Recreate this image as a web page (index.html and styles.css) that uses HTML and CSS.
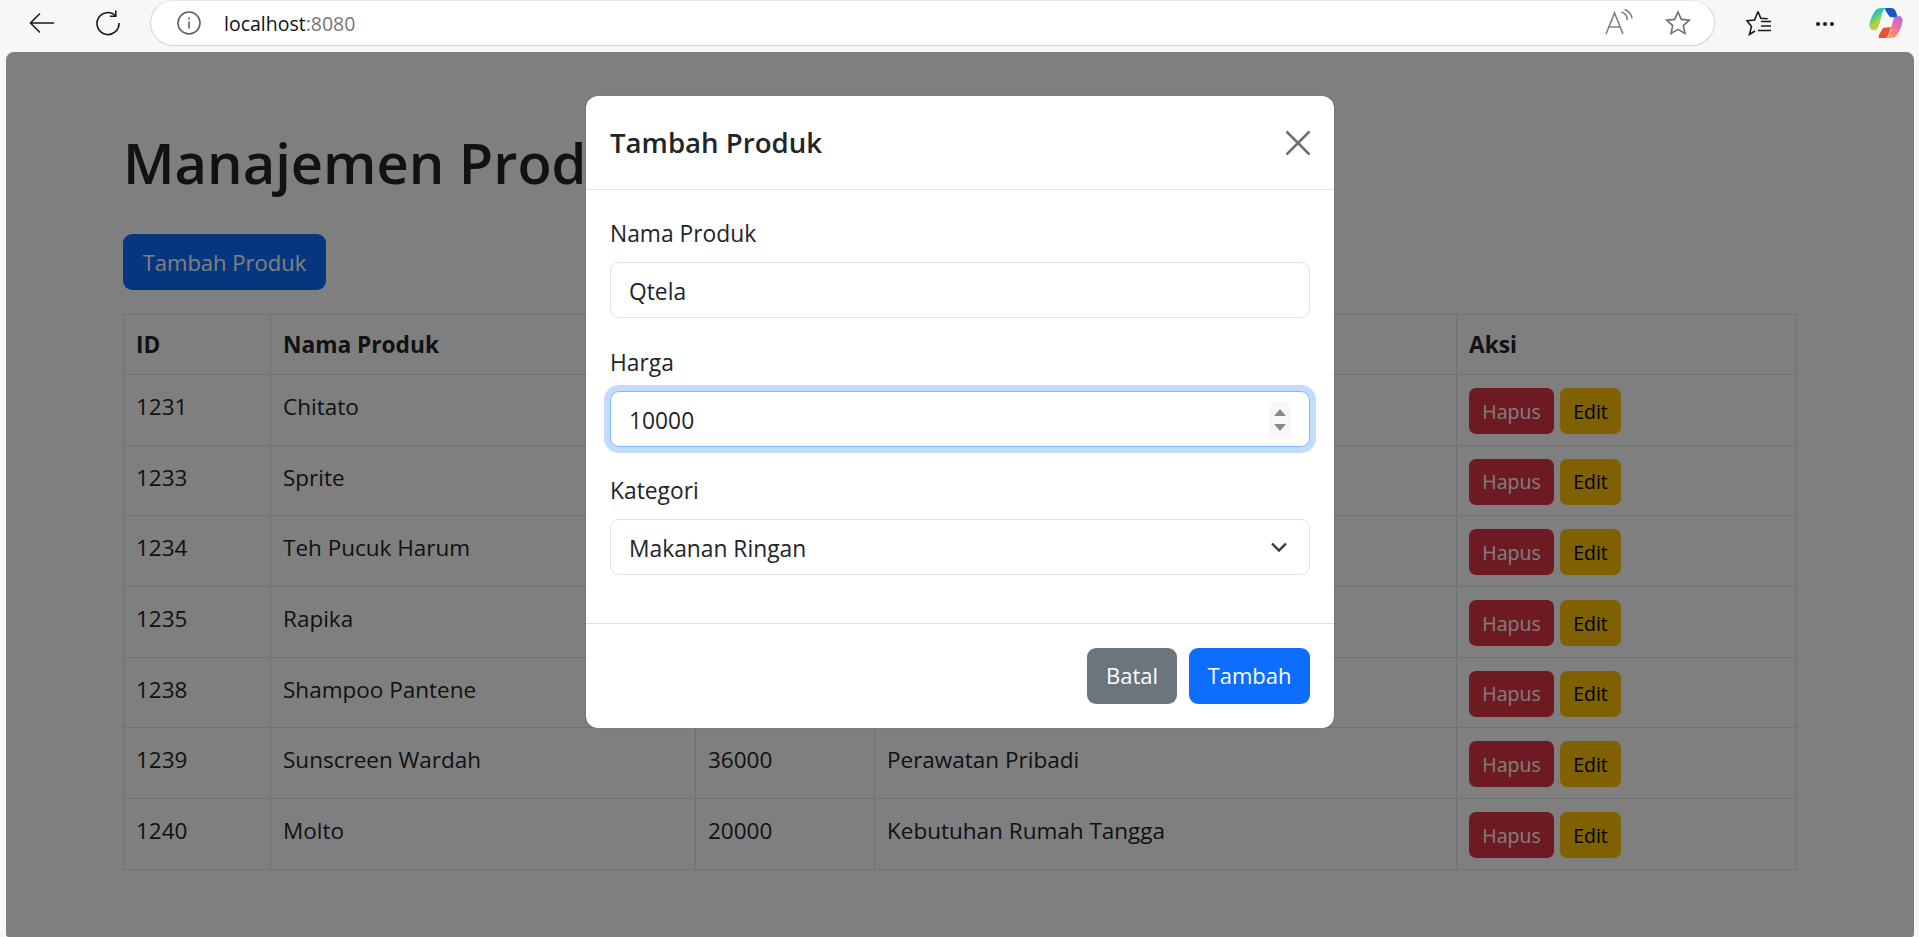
FILE: index.html
```html
<!DOCTYPE html>
<html lang="en">
<head>
    <meta charset="UTF-8">
    <meta name="viewport" content="width=device-width, initial-scale=1.0">
    <title>Manajemen Produk</title>
    <link rel="stylesheet" href="styles.css">
</head>
<body>
    <div class="toolbar">
        <svg class="tool-icon back-icon" width="28" height="28" viewBox="0 0 28 28"><path d="M26 14H3M12 4.500L2.500 14l9.500 9.500" /></svg>
        <svg class="tool-icon reload-icon" width="28" height="28" viewBox="0 0 28 28"><path d="M21.500 6.500A11 11 0 1 0 25 14M21.800 1.500v5.800H16" /></svg>
        <div class="omnibox">
            <svg class="info-icon" width="24" height="24" viewBox="0 0 24 24"><circle cx="12" cy="12" r="11" /><path d="M12 10.500v7M12 6.500v2" /></svg>
            <span class="url">localhost<span class="port">:8080</span></span>
            <svg class="read-icon" width="30" height="28" viewBox="0 0 30 28"><path d="M2 25L10.500 4 19 25M5 18h11M17.500 3c3 1 5.500 4 6 8M20.500 0.500c4 1.500 7 5 7.500 9" /></svg>
            <svg class="star-icon" width="26" height="26" viewBox="0 0 26 26"><path d="M13 2l3.300 7.400 8 .8-6 5.400 1.700 7.900-7-4.100-7 4.100 1.700-7.900-6-5.400 8-.8z" /></svg>
        </div>
        <svg class="tool-icon fav-icon" width="28" height="28" viewBox="0 0 28 28"><path d="M12 2.500l2.700 6.800 7 .5M9 22l-5.500 3.500 2-8L1 11.800l7.500-.8L12 2.500M15 12.500h10M15 17h10M12 21.500h13" /></svg>
        <svg class="more-icon" width="20" height="6" viewBox="0 0 20 6"><circle cx="3" cy="3" r="2" /><circle cx="10" cy="3" r="2" /><circle cx="17" cy="3" r="2" /></svg>
        <svg class="copilot-icon" width="34" height="32" viewBox="0 0 34 32">
            <defs>
                <linearGradient id="cop-left" x1="0" y1="0" x2="0.600" y2="1">
                    <stop offset="0" stop-color="#1e8fe8" />
                    <stop offset="0.350" stop-color="#2fc6b0" />
                    <stop offset="0.650" stop-color="#a8d53a" />
                    <stop offset="1" stop-color="#f5b32c" />
                </linearGradient>
                <linearGradient id="cop-right" x1="0.800" y1="0" x2="0.300" y2="1">
                    <stop offset="0" stop-color="#b46ae0" />
                    <stop offset="0.500" stop-color="#f26fa0" />
                    <stop offset="1" stop-color="#fba34a" />
                </linearGradient>
            </defs>
            <path fill="#1a56c8" d="M15 1h7c2.500 0 4 1.500 5 4l2 6-8-1-3-4c-1-2-2-3.500-3-5z" />
            <path fill="url(#cop-left)" d="M12 1h6c-2 0-3.500 1.500-4.500 4.500L10 18c-1 3.500-2.500 5-5 5-3 0-5-2-4.500-5.500C1 13 4 7 6 4c1.500-2 3.500-3 6-3z" />
            <path fill="#e8503a" d="M10 31h7c1.500-1 2.500-3 3-5l2-6-8 1-3 5c-1 2-2 3.500-1 5z" />
            <path fill="url(#cop-right)" d="M22 31h-6c2 0 3.500-1.500 4.500-4.500L24 14c1-3.500 2.500-5 5-5 3 0 5 2 4.500 5.500-.5 4.500-3.500 10.500-5.500 13.500-1.500 2-3.500 3-6 3z" />
        </svg>
    </div>

    <div class="page">
        <div class="container">
            <h1>Manajemen Produk</h1>
            <button class="btn btn-primary add-btn">Tambah Produk</button>
            <table class="product-table">
                <thead>
                    <tr>
                        <th class="col-id">ID</th>
                        <th class="col-name">Nama Produk</th>
                        <th class="col-price">Harga</th>
                        <th class="col-cat">Kategori</th>
                        <th>Aksi</th>
                    </tr>
                </thead>
                <tbody>
                    <tr><td>1231</td><td>Chitato</td><td>12000</td><td>Makanan Ringan</td><td><button class="btn btn-sm btn-danger">Hapus</button><button class="btn btn-sm btn-warning">Edit</button></td></tr>
                    <tr><td>1233</td><td>Sprite</td><td>8000</td><td>Minuman</td><td><button class="btn btn-sm btn-danger">Hapus</button><button class="btn btn-sm btn-warning">Edit</button></td></tr>
                    <tr><td>1234</td><td>Teh Pucuk Harum</td><td>5000</td><td>Minuman</td><td><button class="btn btn-sm btn-danger">Hapus</button><button class="btn btn-sm btn-warning">Edit</button></td></tr>
                    <tr><td>1235</td><td>Rapika</td><td>15000</td><td>Kebutuhan Rumah Tangga</td><td><button class="btn btn-sm btn-danger">Hapus</button><button class="btn btn-sm btn-warning">Edit</button></td></tr>
                    <tr><td>1238</td><td>Shampoo Pantene</td><td>28000</td><td>Perawatan Pribadi</td><td><button class="btn btn-sm btn-danger">Hapus</button><button class="btn btn-sm btn-warning">Edit</button></td></tr>
                    <tr><td>1239</td><td>Sunscreen Wardah</td><td>36000</td><td>Perawatan Pribadi</td><td><button class="btn btn-sm btn-danger">Hapus</button><button class="btn btn-sm btn-warning">Edit</button></td></tr>
                    <tr><td>1240</td><td>Molto</td><td>20000</td><td>Kebutuhan Rumah Tangga</td><td><button class="btn btn-sm btn-danger">Hapus</button><button class="btn btn-sm btn-warning">Edit</button></td></tr>
                </tbody>
            </table>
        </div>

        <div class="backdrop">
            <div class="modal">
                <div class="modal-header">
                    <h5>Tambah Produk</h5>
                    <svg class="close-icon" width="26" height="26" viewBox="0 0 26 26"><path d="M1.500 1.500l23 23M24.500 1.500l-23 23" /></svg>
                </div>
                <div class="modal-body">
                    <div class="field">
                        <label>Nama Produk</label>
                        <div class="control">Qtela</div>
                    </div>
                    <div class="field">
                        <label>Harga</label>
                        <div class="control control-focus">10000
                            <span class="spinner"><i class="spin-up"></i><i class="spin-down"></i></span>
                        </div>
                    </div>
                    <div class="field">
                        <label>Kategori</label>
                        <div class="control">Makanan Ringan
                            <svg class="select-arrow" width="18" height="12" viewBox="0 0 18 12"><path d="M2 2.500l7 7 7-7" /></svg>
                        </div>
                    </div>
                </div>
                <div class="modal-footer">
                    <button class="btn btn-secondary">Batal</button>
                    <button class="btn btn-primary">Tambah</button>
                </div>
            </div>
        </div>
    </div>
</body>
</html>
```

FILE: styles.css
```css
* {
    box-sizing: border-box;
}

html,
body {
    height: 100%;
}

body {
    margin: 0;
    display: flex;
    flex-direction: column;
    overflow: hidden;
    background-color: #f7f7f7;
    color: #212529;
    font-family: "Open Sans", "Noto Sans", sans-serif;
    font-size: 22.500px;
    line-height: 35px;
}

/* browser bar */
.toolbar {
    height: 52px;
    flex: none;
    display: flex;
    align-items: flex-start;
    padding-left: 28px;
}

.toolbar svg {
    flex: none;
    fill: none;
    stroke-width: 1.6;
}

.tool-icon {
    stroke: #1a1a1a;
    margin-top: 9px;
}

.reload-icon {
    margin-left: 38px;
}

.omnibox {
    width: 1565px;
    height: 46px;
    margin-left: 28px;
    padding: 0 23px 0 26px;
    display: flex;
    align-items: center;
    background-color: #fff;
    border: 1.500px solid #d2d2d2;
    border-top-color: #e8e8e8;
    border-radius: 23px;
}

.info-icon {
    stroke: #5f5f5f;
}

.url {
    margin-left: 23px;
    font-size: 19.500px;
    color: #111;
}

.port {
    color: #767676;
}

.read-icon {
    margin-left: auto;
    stroke: #808080;
}

.star-icon {
    margin-left: 31px;
    stroke: #707070;
}

.fav-icon {
    margin-left: 31px;
}

.toolbar .more-icon {
    margin: 21px 0 0 41px;
    fill: #1a1a1a;
    stroke: none;
}

.toolbar .copilot-icon {
    margin: 7px 0 0 34px;
    stroke: none;
}

/* page */
.page {
    position: relative;
    flex: 1;
    margin: 0 5px 0 6px;
    overflow: hidden;
    background-color: #fff;
    border-radius: 8px 8px 3px 3px;
}

.container {
    padding: 75px 117px 0 117px;
}

h1 {
    margin: 0 0 36px;
    font-size: 56px;
    font-weight: 600;
    line-height: 71px;
}

.btn {
    display: inline-block;
    border: 1px solid transparent;
    border-radius: 9px;
    font-family: inherit;
    font-size: 22px;
    line-height: 35px;
    padding: 0;
    height: 56px;
    white-space: nowrap;
    color: #fff;
}

.btn-primary {
    background-color: #0d6efd;
}

.btn-secondary {
    background-color: #6c757d;
}

.btn-sm {
    height: 46px;
    border-radius: 7px;
    font-size: 19.500px;
}

.btn-danger {
    width: 85px;
    background-color: #dc3545;
}

.btn-warning {
    width: 61px;
    margin-left: 6px;
    background-color: #ffc107;
    color: #000;
}

.add-btn {
    display: block;
    width: 203px;
    margin-bottom: 24px;
}

.product-table {
    width: 1674px;
    border-collapse: collapse;
    table-layout: fixed;
}

.product-table th,
.product-table td {
    border: 1px solid #dee2e6;
    padding: 12px;
    text-align: left;
    vertical-align: top;
}

.product-table td {
    height: 70.700px;
    padding-top: 14px;
}

.product-table th {
    font-size: 22.700px;
    font-weight: 700;
}

.product-table td:last-child {
    padding-top: 13px;
    padding-bottom: 10px;
    white-space: nowrap;
}

.col-id {
    width: 147px;
}

.col-name {
    width: 425px;
}

.col-price {
    width: 179px;
}

.col-cat {
    width: 582px;
}

/* modal */
.backdrop {
    position: absolute;
    inset: 0;
    display: flex;
    justify-content: center;
    align-items: flex-start;
    padding-top: 44px;
    background-color: rgba(0, 0, 0, 0.5);
}

.modal {
    width: 748px;
    background-color: #fff;
    border-radius: 12px;
    box-shadow: 0 0 1px rgba(0, 0, 0, 0.4);
    font-size: 22.800px;
}

.modal-header {
    height: 94px;
    padding: 0 23px 0 24px;
    display: flex;
    align-items: center;
    justify-content: space-between;
    border-bottom: 1px solid #dee2e6;
}

.modal-header h5 {
    margin: 0;
    font-size: 27.600px;
    font-weight: 600;
}

.close-icon {
    fill: none;
    stroke: #6f6f6f;
    stroke-width: 2.500;
}

.modal-body {
    padding: 26px 24px 21px;
}

.field {
    margin-bottom: 26.500px;
}

.field label {
    display: block;
    margin-bottom: 11px;
}

.control {
    position: relative;
    height: 56px;
    padding: 11px 18px;
    background-color: #fff;
    border: 1px solid #dee2e6;
    border-radius: 9px;
}

.control-focus {
    border-color: #86b7fe;
    box-shadow: 0 0 0 6px #c2dbfe;
}

.spinner {
    position: absolute;
    top: 10px;
    right: 18px;
    width: 22px;
    height: 36px;
    display: flex;
    flex-direction: column;
    align-items: center;
    justify-content: center;
    gap: 8px;
    background-color: #f8f8f8;
}

.spinner i {
    display: block;
    border-left: 6px solid transparent;
    border-right: 6px solid transparent;
}

.spin-up {
    border-bottom: 7px solid #8a8a8a;
}

.spin-down {
    border-top: 7px solid #8a8a8a;
}

.select-arrow {
    position: absolute;
    top: 21px;
    right: 21px;
    fill: none;
    stroke: #343a40;
    stroke-width: 2.400;
}

.modal-footer {
    height: 105px;
    padding: 24px;
    display: flex;
    justify-content: flex-end;
    gap: 12px;
    border-top: 1px solid #dee2e6;
}

.modal-footer .btn-secondary {
    width: 90px;
}

.modal-footer .btn-primary {
    width: 121px;
}
```
